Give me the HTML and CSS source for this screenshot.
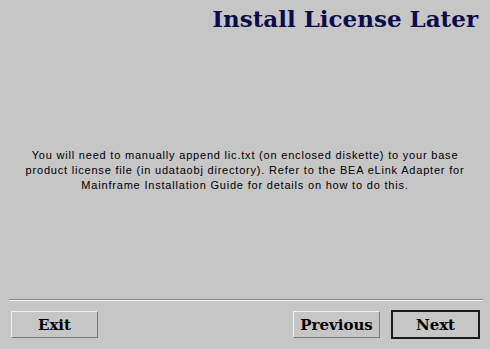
FILE: index.html
```html
<!DOCTYPE html>
<html lang="en">
<head>
  <meta charset="UTF-8" />
  <title>Install License Later</title>
  <link rel="stylesheet" href="styles.css">
</head>
<body>
  <div class="wizard">
    <h1 class="title">Install License Later</h1>

    <div class="content">
      <p>You will need to manually append lic.txt (on enclosed diskette) to your base<br>
      product license file (in udataobj directory). Refer to the BEA eLink Adapter for<br>
      Mainframe Installation Guide for details on how to do this.</p>
    </div>

    <div class="footer">
      <div class="separator"></div>
      <div class="buttons">
        <button class="btn">Exit</button>
        <div class="nav">
          <button class="btn">Previous</button>
          <button class="btn default">Next</button>
        </div>
      </div>
    </div>
  </div>
</body>
</html>
```

FILE: styles.css
```css
* { box-sizing: border-box; margin: 0; padding: 0; }
body, html {
  width: 100%;
  height: 100%;
  background: #c6c6c6;
  overflow: hidden;
}

.wizard {
  display: flex;
  flex-direction: column;
  height: 100%;
}

.title {
  font-family: "DejaVu Serif", serif;
  font-weight: bold;
  font-size: 23px;
  line-height: 30px;
  color: #0c0c4a;
  text-align: right;
  padding: 4px 12px 0 0;
}

.content {
  flex: 1;
  display: flex;
  align-items: center;
  justify-content: center;
  padding: 0 10px;
}

.content p {
  font-family: "Liberation Sans", sans-serif;
  font-size: 11px;
  line-height: 15px;
  color: #000;
  text-align: center;
  letter-spacing: 0.8px;
  margin-top: 8px;
}

.footer {
  padding: 0 7px 10px 9px;
}

.separator {
  height: 2px;
  border-top: 1px solid #8a8a8a;
  border-bottom: 1px solid #f4f4f4;
  margin-bottom: 10px;
}

.buttons {
  display: flex;
  justify-content: space-between;
  padding: 0 3px 0 2px;
}

.nav {
  display: flex;
  gap: 11px;
}

.btn {
  width: 87px;
  height: 27px;
  background: #c6c6c6;
  border: 1px solid;
  border-color: #f0f0f0 #7a7a7a #7a7a7a #f0f0f0;
  font-family: "DejaVu Serif", serif;
  font-weight: bold;
  font-size: 15px;
  color: #000;
}

.btn.default {
  width: 89px;
  height: 29px;
  margin-top: -1px;
  border: 2px solid #1a1a1a;
}
```
